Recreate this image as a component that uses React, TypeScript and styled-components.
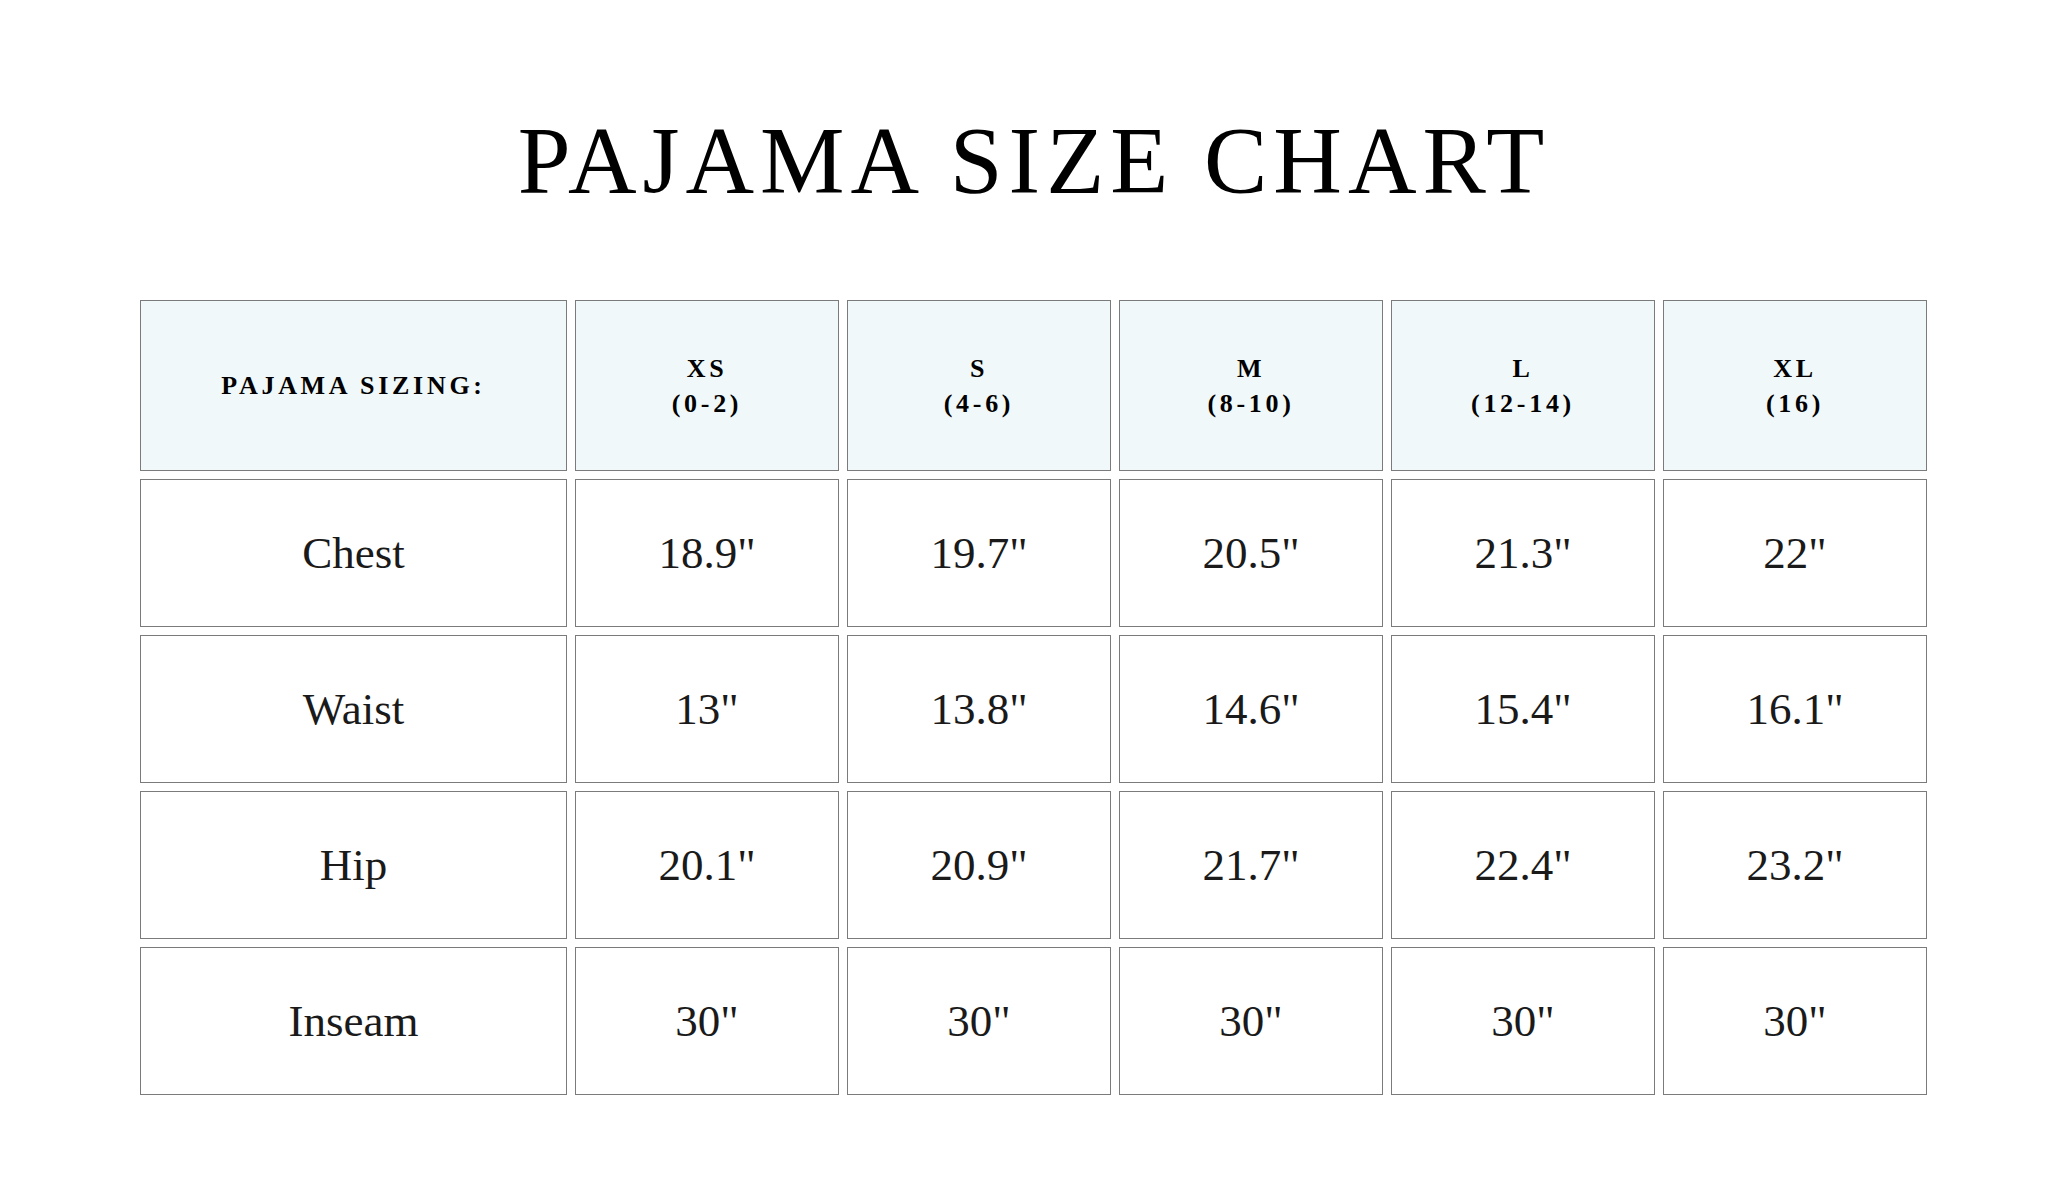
import React from 'react';
import styled, { createGlobalStyle, css } from 'styled-components';

const SERIF = `'Liberation Serif', 'DejaVu Serif', serif`;

const GlobalStyle = createGlobalStyle`
  html, body {
    margin: 0;
    padding: 0;
    background: #ffffff;
  }
`;

const Page = styled.div`
  width: 2048px;
  height: 1200px;
  box-sizing: border-box;
  padding: 121px 120px 0 140px;

  background: #ffffff;
  font-family: ${SERIF};
`;

const Title = styled.h1`
  margin: 0 0 99px;

  font-family: ${SERIF};
  font-size: 95px;
  font-weight: 400;
  line-height: 80px;
  letter-spacing: 6px;
  text-align: center;
  color: #000000;
`;

const Chart = styled.div`
  display: grid;
  grid-template-columns: 427px repeat(5, 264px);
  grid-template-rows: 171px repeat(4, 148px);
  column-gap: 8px;
  row-gap: 8px;

  width: 1788px;
`;

const Cell = styled.div<{ $head?: boolean }>`
  ${({ $head }) => css`
    display: flex;
    flex-direction: column;
    align-items: center;
    justify-content: center;

    box-sizing: border-box;
    border: 1px solid #7b7b7b;
    background-color: ${$head ? '#f0f8fa' : '#ffffff'};

    text-align: center;
    color: #1a1a1a;
  `}
`;

const HeadLabel = styled.span`
  font-size: 26px;
  font-weight: 700;
  line-height: 35px;
  letter-spacing: 3.7px;
  color: #000000;
`;

const Value = styled.span`
  font-size: 45px;
  font-weight: 400;
  line-height: 50px;
  color: #1a1a1a;
`;

type Size = {
  label: string;
  range: string;
};

const SIZES: Size[] = [
  { label: 'XS', range: '(0-2)' },
  { label: 'S', range: '(4-6)' },
  { label: 'M', range: '(8-10)' },
  { label: 'L', range: '(12-14)' },
  { label: 'XL', range: '(16)' },
];

const ROWS: Array<{ name: string; values: string[] }> = [
  { name: 'Chest', values: ['18.9"', '19.7"', '20.5"', '21.3"', '22"'] },
  { name: 'Waist', values: ['13"', '13.8"', '14.6"', '15.4"', '16.1"'] },
  { name: 'Hip', values: ['20.1"', '20.9"', '21.7"', '22.4"', '23.2"'] },
  { name: 'Inseam', values: ['30"', '30"', '30"', '30"', '30"'] },
];

export default function App() {
  return (
    <>
      <GlobalStyle />
      <Page>
        <Title>PAJAMA SIZE CHART</Title>

        <Chart>
          <Cell $head>
            <HeadLabel>PAJAMA SIZING:</HeadLabel>
          </Cell>
          {SIZES.map((size) => (
            <Cell $head key={size.label}>
              <HeadLabel>{size.label}</HeadLabel>
              <HeadLabel>{size.range}</HeadLabel>
            </Cell>
          ))}

          {ROWS.map((row) => (
            <React.Fragment key={row.name}>
              <Cell>
                <Value>{row.name}</Value>
              </Cell>
              {row.values.map((value, i) => (
                <Cell key={i}>
                  <Value>{value}</Value>
                </Cell>
              ))}
            </React.Fragment>
          ))}
        </Chart>
      </Page>
    </>
  );
}
